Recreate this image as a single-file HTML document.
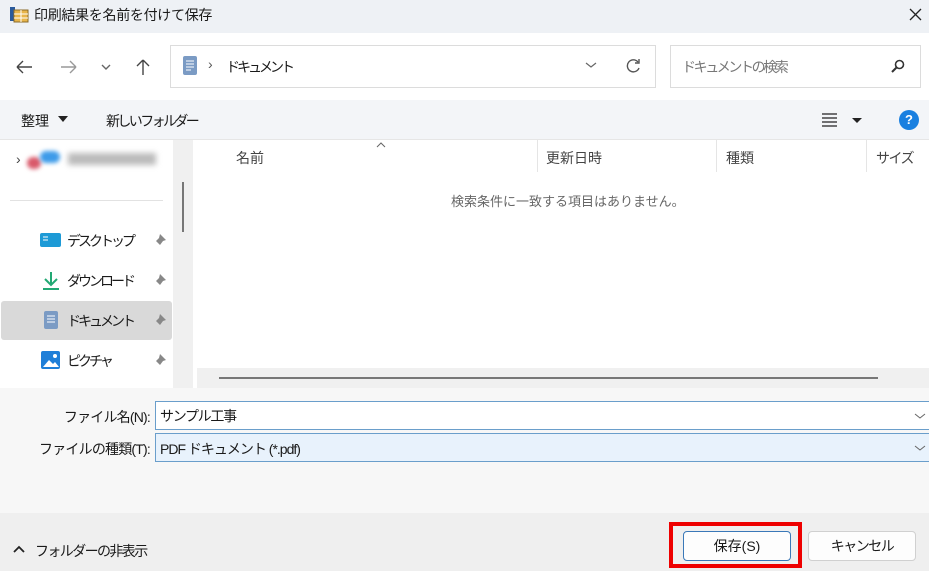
<!DOCTYPE html>
<html><head><meta charset="utf-8"><style>
*{box-sizing:border-box;margin:0;padding:0}
body{width:929px;height:571px;overflow:hidden;position:relative;background:#fff;font-family:"Liberation Sans","Noto Sans CJK JP",sans-serif;font-size:14px;color:#1a1a1a}
.a{position:absolute}
.t{white-space:nowrap}
.k{letter-spacing:-3px}
</style></head><body>
<div class="a" style="left:0;top:0;width:929px;height:33px;background:#eef1f5"></div>
<svg class="a" style="left:9px;top:6px" width="20" height="18"><rect x="1" y="1" width="5" height="14" fill="#2a5a9c"/><rect x="5" y="4" width="14" height="12" fill="#e8b54a" stroke="#8a6a2a"/><line x1="5" y1="8" x2="19" y2="8" stroke="#fff"/><line x1="5" y1="12" x2="19" y2="12" stroke="#fff"/><line x1="12" y1="4" x2="12" y2="16" stroke="#fff"/></svg>
<div class="a t" style="left:34px;top:5px;font-size:14px;letter-spacing:-0.3px">印刷結果を名前を付けて保存</div>
<svg class="a" style="left:909px;top:8px" width="13" height="13"><path d="M1 1L12 12M12 1L1 12" stroke="#222" stroke-width="1.3"/></svg>

<svg class="a" style="left:14px;top:56px" width="150" height="22" fill="none" stroke-width="1.4">
<path d="M3 11H18M3 11L9 5M3 11L9 17" stroke="#444"/>
<path d="M47 11H62M62 11L56 5M62 11L56 17" stroke="#999"/>
<path d="M88 9L92 13L96 9" stroke="#666"/>
<path d="M129 4V19M129 4L123 10M129 4L135 10" stroke="#444"/>
</svg>
<div class="a" style="left:170px;top:45px;width:486px;height:43px;border:1px solid #dcdcdc;background:#fff"></div>
<svg class="a" style="left:182px;top:55px" width="16" height="22"><rect x="1" y="1" width="14" height="19" rx="2" fill="#7b9bc4"/><path d="M4 6h8M4 9h8M4 12h8M4 15h5" stroke="#fff"/></svg>
<div class="a t" style="left:208px;top:56px;color:#555">›</div>
<div class="a t k" style="left:226px;top:57px">ドキュメント</div>
<svg class="a" style="left:584px;top:60px" width="14" height="10"><path d="M2 3L7 7L12 3" stroke="#666" fill="none" stroke-width="1.2"/></svg>
<svg class="a" style="left:624px;top:57px" width="18" height="18"><path d="M14 5A6 6 0 1 0 15 11" stroke="#555" fill="none" stroke-width="1.4"/><path d="M15 2V6H11" stroke="#555" fill="none" stroke-width="1.4"/></svg>
<div class="a" style="left:670px;top:45px;width:251px;height:43px;border:1px solid #dcdcdc;background:#fff"></div>
<div class="a t" style="left:682px;top:57px;color:#777;font-size:14px;letter-spacing:-2.4px">ドキュメントの検索</div>
<svg class="a" style="left:890px;top:58px" width="16" height="16"><circle cx="9.5" cy="6.5" r="4" stroke="#333" fill="none" stroke-width="1.6"/><path d="M6.5 9.5L2 14" stroke="#333" stroke-width="2"/></svg>

<div class="a" style="left:0;top:100px;width:929px;height:40px;background:#f3f5f8;border-bottom:1px solid #e6e6e6"></div>
<div class="a t" style="left:21px;top:111px">整理</div>
<svg class="a" style="left:58px;top:116px" width="10" height="6"><path d="M0 0H10L5 6Z" fill="#222"/></svg>
<div class="a t" style="left:106px;top:111px;letter-spacing:-2.6px">新しいフォルダー</div>
<svg class="a" style="left:822px;top:112px" width="40" height="16"><path d="M0 2H15M0 6H15M0 10H15M0 14H15" stroke="#222" stroke-width="1.3"/><path d="M30 6H40L35 11Z" fill="#222"/></svg>
<div class="a" style="left:899px;top:110px;width:20px;height:20px;border-radius:50%;background:#1a80e0;color:#fff;font-weight:bold;font-size:13px;text-align:center;line-height:20px">?</div>

<div class="a" style="left:173px;top:140px;width:20px;height:248px;background:#f0f0f0"></div>
<div class="a" style="left:182px;top:182px;width:2px;height:50px;background:#777"></div>
<div class="a" style="left:193px;top:140px;width:4px;height:248px;background:#fff"></div>
<div class="a" style="left:197px;top:368px;width:732px;height:20px;background:#f0f0f0"></div>
<div class="a" style="left:219px;top:377px;width:659px;height:2px;background:#777"></div>

<div class="a t" style="left:16px;top:151px;color:#444">›</div>
<div class="a" style="left:27px;top:157px;width:14px;height:12px;border-radius:6px;background:#d9596a;filter:blur(2px)"></div>
<div class="a" style="left:40px;top:151px;width:20px;height:12px;border-radius:6px;background:#3d9be9;filter:blur(2px)"></div>
<div class="a" style="left:68px;top:153px;width:88px;height:12px;background:#bbb;filter:blur(3px)"></div>
<div class="a" style="left:10px;top:200px;width:153px;height:1px;background:#e2e2e2"></div>

<svg class="a" style="left:40px;top:232px" width="22" height="16"><rect x="0" y="1" width="21" height="14" rx="2" fill="#1d9ad6"/><path d="M3 5h5M3 8h5" stroke="#fff"/></svg>
<div class="a t k" style="left:67px;top:231px">デスクトップ</div>
<svg class="a" style="left:42px;top:271px" width="18" height="20"><path d="M9 1V13M3 8L9 14L15 8" stroke="#22a873" fill="none" stroke-width="2"/><path d="M1 18H17" stroke="#22a873" stroke-width="2"/></svg>
<div class="a t k" style="left:67px;top:271px">ダウンロード</div>
<div class="a" style="left:1px;top:301px;width:171px;height:39px;background:#d9d9d9;border-radius:3px"></div>
<svg class="a" style="left:43px;top:310px" width="16" height="20"><rect x="1" y="1" width="14" height="18" rx="2" fill="#7b9bc4"/><path d="M4 6h8M4 9h8M4 12h8" stroke="#fff"/></svg>
<div class="a t k" style="left:67px;top:311px">ドキュメント</div>
<svg class="a" style="left:41px;top:351px" width="20" height="19"><rect x="0" y="0" width="19" height="18" rx="2" fill="#1f7fd8"/><path d="M2 16L8 9L12 13L14 11L18 16Z" fill="#fff"/><circle cx="14" cy="5" r="2" fill="#fff"/></svg>
<div class="a t k" style="left:67px;top:351px">ピクチャ</div>
<svg class="a" style="left:153px;top:232px" width="16" height="140" fill="#888">
<path d="M7 2L13 8L10 9L7 13L3 9L6 6Z"/><path d="M7 42L13 48L10 49L7 53L3 49L6 46Z"/><path d="M7 82L13 88L10 89L7 93L3 89L6 86Z"/><path d="M7 122L13 128L10 129L7 133L3 129L6 126Z"/></svg>

<div class="a t" style="left:236px;top:148px;color:#444">名前</div>
<svg class="a" style="left:376px;top:142px" width="10" height="6"><path d="M1 5L5 1L9 5" stroke="#666" fill="none"/></svg>
<div class="a" style="left:537px;top:140px;width:1px;height:32px;background:#e5e5e5"></div>
<div class="a t" style="left:546px;top:148px;color:#444">更新日時</div>
<div class="a" style="left:716px;top:140px;width:1px;height:32px;background:#e5e5e5"></div>
<div class="a t" style="left:726px;top:148px;color:#444">種類</div>
<div class="a" style="left:866px;top:140px;width:1px;height:32px;background:#e5e5e5"></div>
<div class="a t" style="left:876px;top:148px;color:#444;letter-spacing:-1.5px">サイズ</div>
<div class="a t" style="left:451px;top:191px;color:#666;font-size:13px">検索条件に一致する項目はありません。</div>

<div class="a" style="left:0;top:388px;width:929px;height:125px;background:#f7f7f7"></div>
<div class="a t" style="right:779px;top:407px;letter-spacing:-0.8px">ファイル名(N):</div>
<div class="a t" style="right:779px;top:439px;letter-spacing:-0.8px">ファイルの種類(T):</div>
<div class="a" style="left:155px;top:401px;width:774px;height:29px;background:#fff;border:1px solid #6a9ecb;border-right:none"></div>
<div class="a t" style="left:160px;top:406px;letter-spacing:-1.3px">サンプル工事</div>
<div class="a" style="left:155px;top:433px;width:774px;height:29px;background:#e8f2fc;border:1px solid #6a9ecb;border-right:none"></div>
<div class="a t" style="left:160px;top:439px;letter-spacing:-1px">PDF ドキュメント (*.pdf)</div>
<svg class="a" style="left:914px;top:411px" width="12" height="44"><path d="M1 3L6 7L11 3M1 35L6 39L11 35" stroke="#666" fill="none"/></svg>

<div class="a" style="left:0;top:513px;width:929px;height:58px;background:#efefef"></div>
<svg class="a" style="left:13px;top:545px" width="12" height="8"><path d="M1 7L6 2L11 7" stroke="#222" fill="none" stroke-width="1.8"/></svg>
<div class="a t" style="left:35px;top:541px;letter-spacing:-1.6px">フォルダーの非表示</div>
<div class="a" style="left:669px;top:522px;width:133px;height:46px;border:4px solid #ee0000"></div>
<div class="a" style="left:683px;top:531px;width:108px;height:30px;background:#fdfdfd;border:1px solid #3a78b8;border-radius:4px;text-align:center;line-height:28px">保存(S)</div>
<div class="a" style="left:808px;top:531px;width:108px;height:30px;background:#fdfdfd;border:1px solid #d0d0d0;border-radius:4px;text-align:center;line-height:28px;letter-spacing:-1.5px">キャンセル</div>
</body></html>
